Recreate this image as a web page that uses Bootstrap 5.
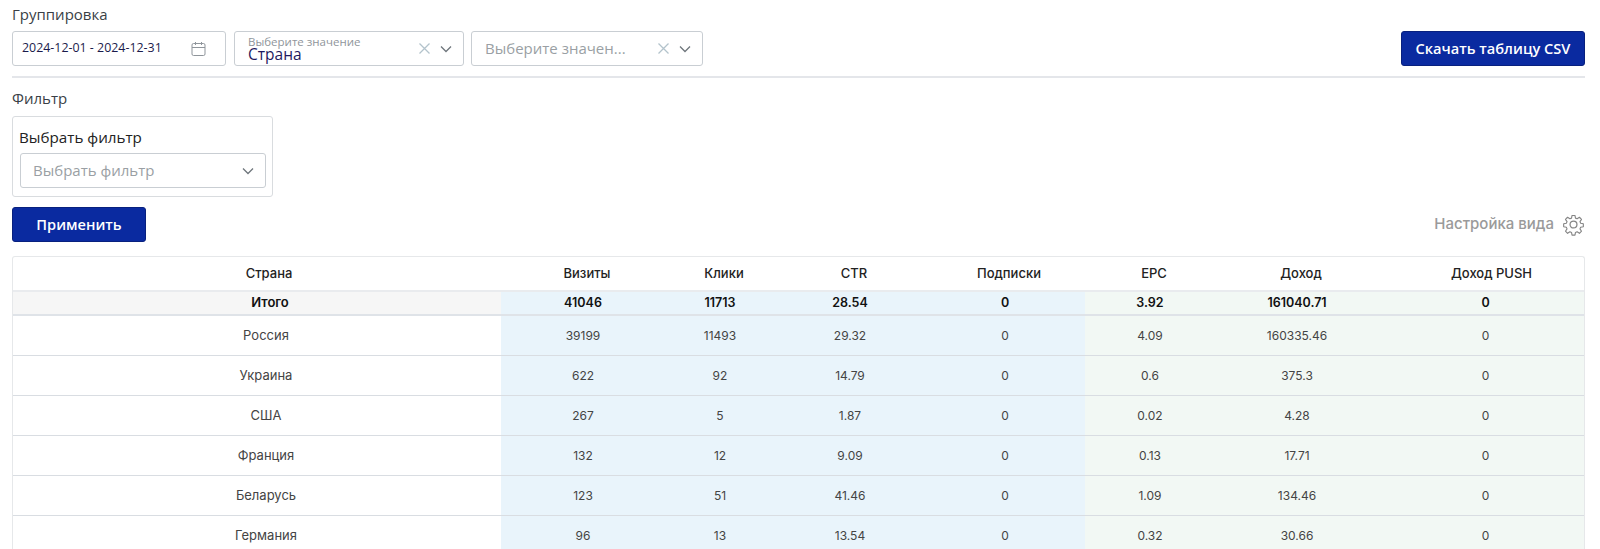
<!DOCTYPE html>
<html lang="ru"><head><meta charset="utf-8"><title>Отчёт</title>
<link href="https://cdn.jsdelivr.net/npm/bootstrap@5.3.0/dist/css/bootstrap.min.css" rel="stylesheet">
<style>
html,body{height:549px;overflow:hidden;background:#fff}
body{font-family:"Open Sans","Liberation Sans",sans-serif;color:#212529;padding:0 15px 0 12px}
.cap{font-size:15px;line-height:18px;color:#3a3f46;margin:0}
.cap-top{padding-top:5px;margin-bottom:8px}
.bar{height:35px;gap:8px}
.fieldbox{height:35px;border:1px solid #c9ced3;border-radius:3px;background:#fff;display:flex;align-items:center;color:#98a0a6;position:relative}
.f-date{width:214px;padding:0 19px 0 9px;color:#1b1b4b;font-size:12.4px;justify-content:space-between}
.f-sel{width:230px;padding:0 11px 0 13px}
.f-sel2{width:232px;padding:0 11px 0 13px;margin-left:-1px}
.ph{font-size:15px;color:#9a9fa4;flex:1}
.stack{flex:1;line-height:1;color:#1f1a5e}
.stack small{display:block;font-size:11.5px;color:#8f959b;line-height:10px}
.stack span{display:block;font-size:15.5px;line-height:14px}
.xicon{margin-right:9px}
.brandbtn{background:#0a2aa0;border:1px solid #08207e;color:#fff;border-radius:3px;font-weight:600;font-size:14.6px;height:35px;padding:0;display:flex;align-items:center;justify-content:center}
.b-csv{width:184px;margin-left:auto}
.b-apply{width:134px}
.rule{height:2px;background:#e4e6ea;margin:10px 0 0}
.cap-filter{padding-top:11px;margin-bottom:9px}
.filterbox{width:261px;height:81px;border:1px solid #d9dcdf;border-radius:3px;padding:11px 6px 0 7px}
.filterbox label{font-size:15.2px;line-height:18px;color:#222;display:block;margin-bottom:7px;margin-left:-1px}
.f-full{width:246px;padding:0 11px 0 12px}
.viewrow{height:35px;margin-top:10px}
.viewlabel{font-size:15px;font-weight:500;color:#9a9a9a;margin-right:8px;font-family:Inter,sans-serif}
.tblbox{margin-top:14px;border:1px solid #e6e8ea;border-radius:3px;border-bottom:0;overflow:hidden}
.datatbl{table-layout:fixed;width:100%;margin:0;font-family:Inter,"Open Sans",sans-serif;font-size:12px}
.datatbl th,.datatbl td{text-align:center;vertical-align:middle;padding:0;border-bottom:1px solid #d9dde2;font-weight:400;color:#444;background:transparent;box-shadow:none}
.datatbl thead th{height:34px;border-bottom:2px solid #e9ebee;font-weight:500;color:#222;padding-left:8px;font-size:13px}
.datatbl thead th:first-child{padding-left:24px}
.datatbl thead th:last-child{padding-left:20px}
.datatbl td{height:40px;padding-top:1px}
.datatbl td:first-child{padding-left:18px;font-size:13px}
.datatbl td:last-child{padding-left:8px}
.datatbl .sumrow td{height:24px;padding-top:0;font-weight:600;font-size:12.5px;color:#111;border-bottom:2px solid #dfe3e8}
.datatbl .sumrow td:first-child{background:#f6f6f6;padding-left:26px;font-size:13px}
.datatbl td.cb{background:#e9f4fb}
.datatbl td.cg{background:#f2f8f4}
</style></head><body>
<p class="cap cap-top">Группировка</p>
<div class="d-flex bar">
 <div class="fieldbox f-date"><span>2024-12-01 - 2024-12-31</span>
  <svg width="15" height="16" viewBox="0 0 15 16" fill="none" stroke="#8f959b" stroke-width="1"><rect x="1" y="2.5" width="13" height="12" rx="1.5"/><path d="M1 6.5h13M4.5 1v3M10.5 1v3"/></svg></div>
 <div class="fieldbox f-sel"><div class="stack"><small>Выберите значение</small><span>Страна</span></div>
  <svg class="xicon" width="13" height="13" viewBox="0 0 13 13" fill="none" stroke="#b3c3cc" stroke-width="1.3"><path d="M1.5 1.5l10 10M11.5 1.5l-10 10"/></svg>
  <svg width="12" height="8" viewBox="0 0 12 8" fill="none" stroke="#6f767c" stroke-width="1.3"><path d="M1 1.5l5 5 5-5"/></svg></div>
 <div class="fieldbox f-sel2"><span class="ph">Выберите значен...</span>
  <svg class="xicon" width="13" height="13" viewBox="0 0 13 13" fill="none" stroke="#b3c3cc" stroke-width="1.3"><path d="M1.5 1.5l10 10M11.5 1.5l-10 10"/></svg>
  <svg width="12" height="8" viewBox="0 0 12 8" fill="none" stroke="#6f767c" stroke-width="1.3"><path d="M1 1.5l5 5 5-5"/></svg></div>
 <button class="btn brandbtn b-csv" type="button">Скачать таблицу CSV</button>
</div>
<div class="rule"></div>
<p class="cap cap-filter">Фильтр</p>
<div class="filterbox"><label>Выбрать фильтр</label>
 <div class="fieldbox f-full"><span class="ph">Выбрать фильтр</span>
  <svg width="12" height="8" viewBox="0 0 12 8" fill="none" stroke="#6f767c" stroke-width="1.3"><path d="M1 1.5l5 5 5-5"/></svg></div></div>
<div class="d-flex align-items-center justify-content-between viewrow">
 <button class="btn brandbtn b-apply" type="button">Применить</button>
 <div class="d-flex align-items-center"><span class="viewlabel">Настройка вида</span>
  <svg width="23" height="23" viewBox="0 0 24 24" fill="none" stroke="#858585" stroke-width="1.3" stroke-linejoin="round"><circle cx="12" cy="12" r="3.6"/><path d="M10.3 1.5h3.4l.6 3.1 1.9.8 2.7-1.8 2.4 2.4-1.8 2.7.8 1.9 3.1.6v3.4l-3.1.6-.8 1.9 1.8 2.7-2.4 2.4-2.7-1.8-1.9.8-.6 3.1h-3.4l-.6-3.1-1.9-.8-2.7 1.8-2.4-2.4 1.8-2.7-.8-1.9-3.1-.6v-3.4l3.1-.6.8-1.9-1.8-2.7 2.4-2.4 2.7 1.8 1.9-.8z" transform="translate(1.2 1.2) scale(.9)"/></svg></div>
</div>
<div class="tblbox">
<table class="table datatbl">
<colgroup><col style="width:488px"><col style="width:164px"><col style="width:110px"><col style="width:150px"><col style="width:160px"><col style="width:130px"><col style="width:164px"><col></colgroup>
<thead><tr><th>Страна</th><th>Визиты</th><th>Клики</th><th>CTR</th><th>Подписки</th><th>EPC</th><th>Доход</th><th>Доход PUSH</th></tr></thead>
<tbody>
<tr class="sumrow"><td>Итого</td><td class="cb">41046</td><td class="cb">11713</td><td class="cb">28.54</td><td class="cb">0</td><td class="cg">3.92</td><td class="cg">161040.71</td><td class="cg">0</td></tr>
<tr><td>Россия</td><td class="cb">39199</td><td class="cb">11493</td><td class="cb">29.32</td><td class="cb">0</td><td class="cg">4.09</td><td class="cg">160335.46</td><td class="cg">0</td></tr>
<tr><td>Украина</td><td class="cb">622</td><td class="cb">92</td><td class="cb">14.79</td><td class="cb">0</td><td class="cg">0.6</td><td class="cg">375.3</td><td class="cg">0</td></tr>
<tr><td>США</td><td class="cb">267</td><td class="cb">5</td><td class="cb">1.87</td><td class="cb">0</td><td class="cg">0.02</td><td class="cg">4.28</td><td class="cg">0</td></tr>
<tr><td>Франция</td><td class="cb">132</td><td class="cb">12</td><td class="cb">9.09</td><td class="cb">0</td><td class="cg">0.13</td><td class="cg">17.71</td><td class="cg">0</td></tr>
<tr><td>Беларусь</td><td class="cb">123</td><td class="cb">51</td><td class="cb">41.46</td><td class="cb">0</td><td class="cg">1.09</td><td class="cg">134.46</td><td class="cg">0</td></tr>
<tr><td>Германия</td><td class="cb">96</td><td class="cb">13</td><td class="cb">13.54</td><td class="cb">0</td><td class="cg">0.32</td><td class="cg">30.66</td><td class="cg">0</td></tr>
</tbody></table></div>
<script src="https://cdn.jsdelivr.net/npm/bootstrap@5.3.0/dist/js/bootstrap.bundle.min.js"></script>
</body></html>
